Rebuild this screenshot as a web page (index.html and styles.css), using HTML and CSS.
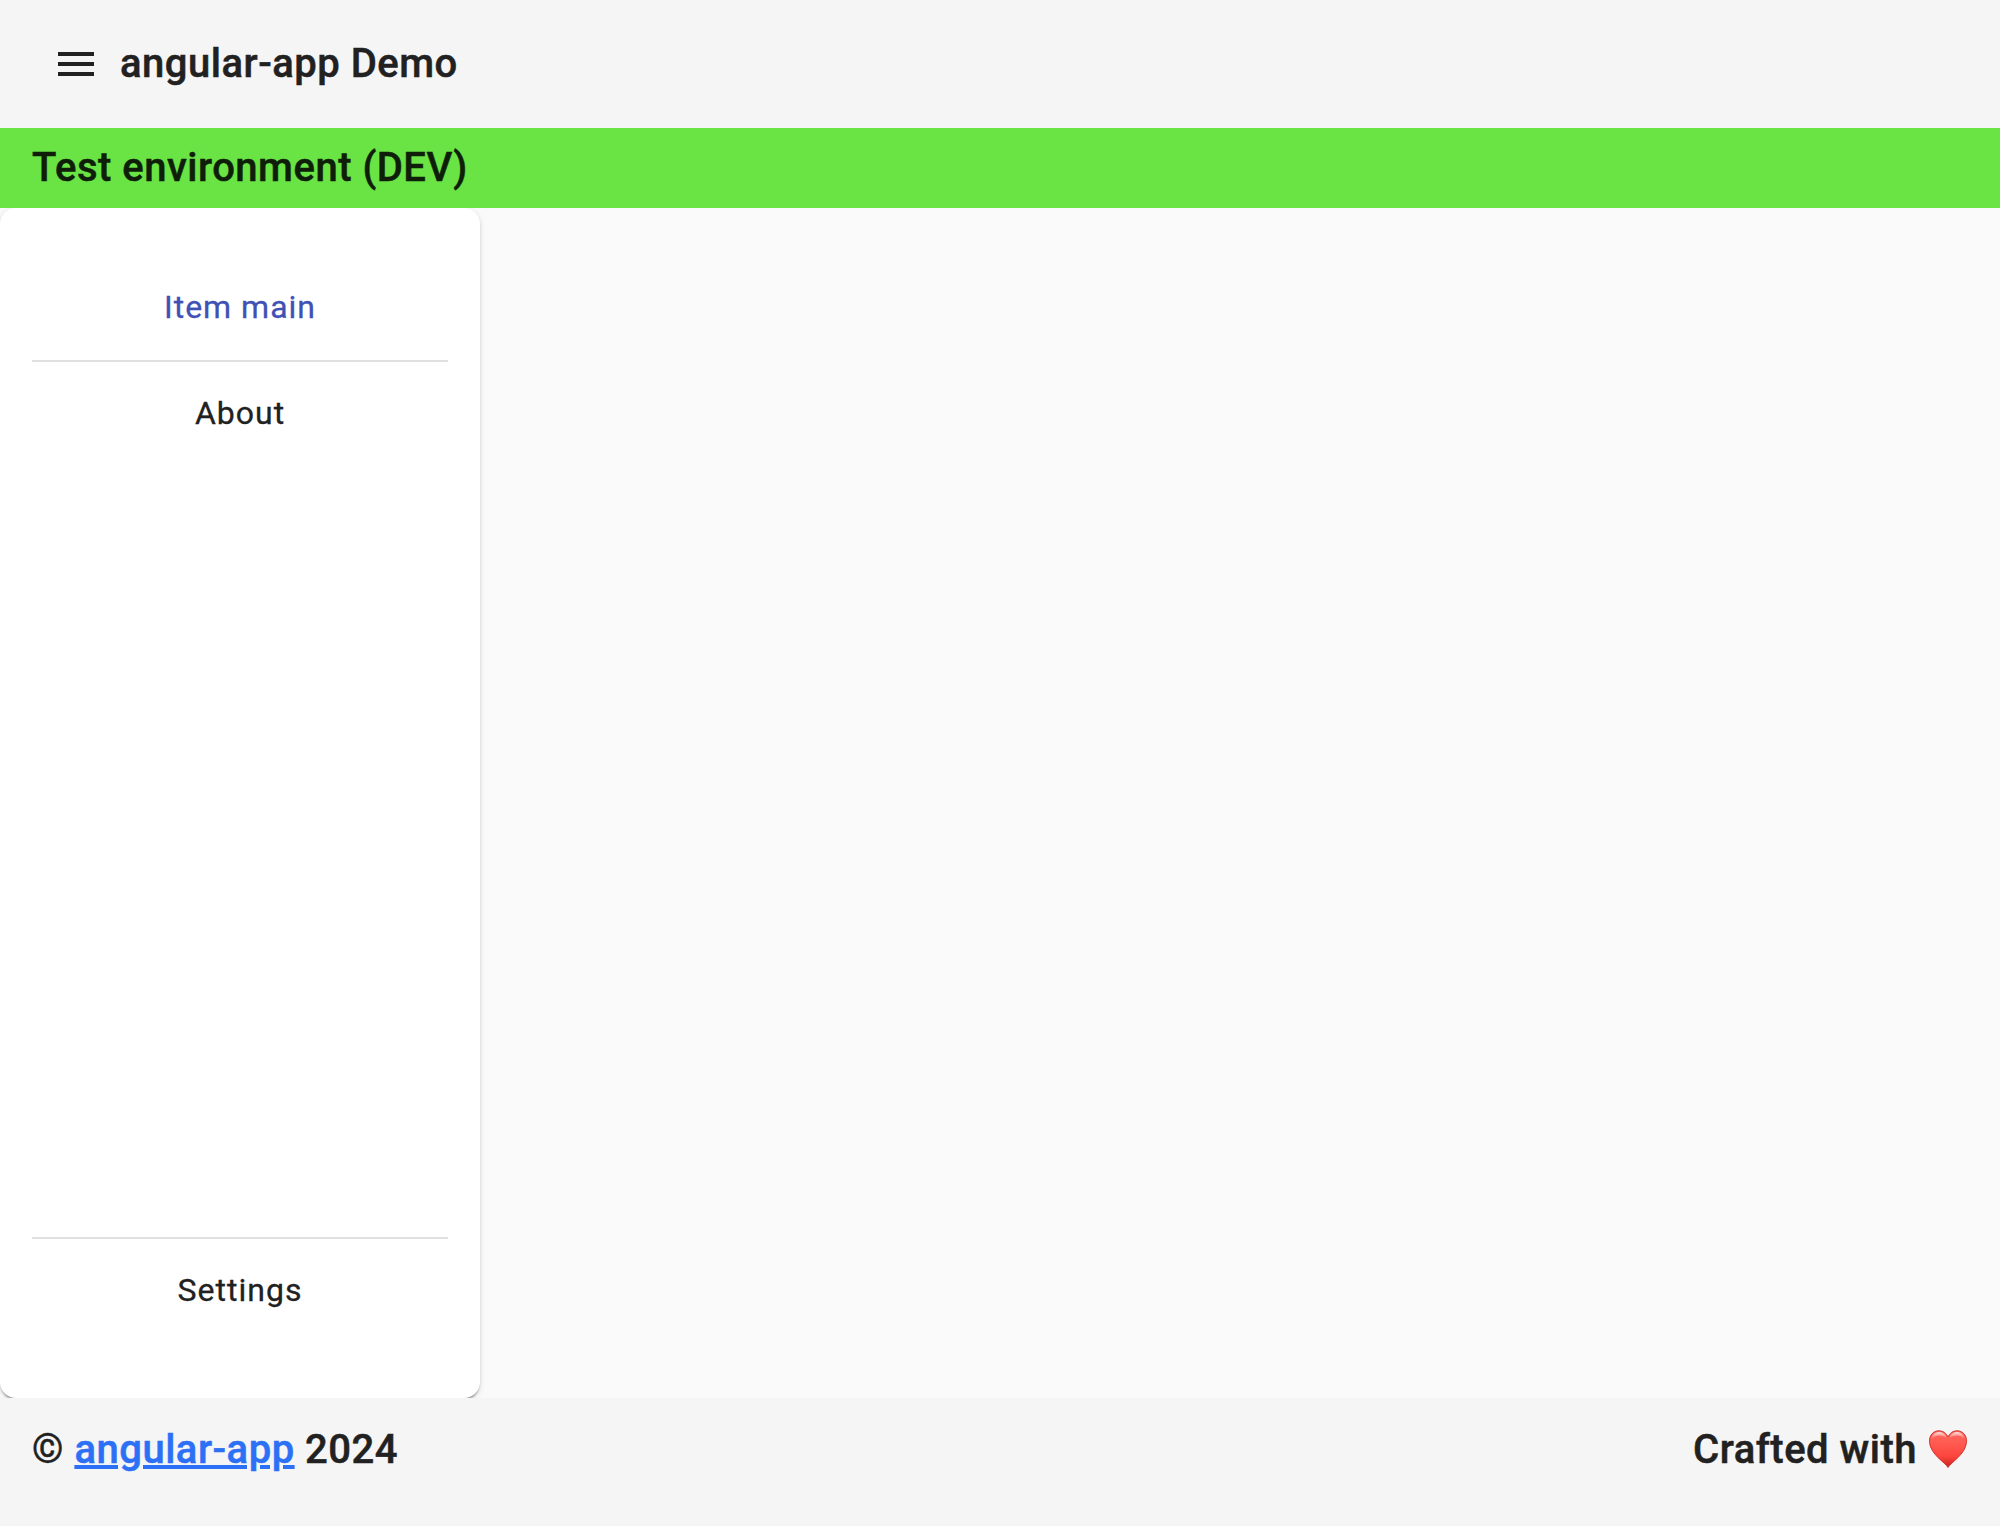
FILE: index.html
```html
<!DOCTYPE html>
<html lang="en">
<head>
  <meta charset="utf-8">
  <title>angular-app Demo</title>
  <link rel="stylesheet" href="styles.css">
</head>
<body>
  <div class="app">
    <header class="header">
      <svg class="menu-icon" viewBox="0 0 24 24" aria-label="Menu"><path d="M3 18h18v-2H3v2zm0-5h18v-2H3v2zm0-7v2h18V6H3z" fill="currentColor"/></svg>
      <h1 class="title">angular-app Demo</h1>
    </header>
    <div class="banner">Test environment (DEV)</div>
    <main class="main">
      <nav class="sidenav">
        <a class="item item-active">Item main</a>
        <a class="item item-divided">About</a>
        <div class="spacer"></div>
        <a class="item item-divided">Settings</a>
      </nav>
    </main>
    <footer class="footer">
      <span class="copyright">© <a class="link" href="#">angular-app</a> 2024</span>
      <span class="crafted">Crafted with
        <svg class="heart" viewBox="0 0 38 38" aria-label="love">
          <defs>
            <linearGradient id="body" x1="0" y1="0" x2="0" y2="1">
              <stop offset="0" stop-color="#ff6a60"/>
              <stop offset=".35" stop-color="#ff5a50"/>
              <stop offset=".7" stop-color="#fb453e"/>
              <stop offset="1" stop-color="#c91f20"/>
            </linearGradient>
            <linearGradient id="gloss" x1="0" y1="0" x2="0" y2="1">
              <stop offset="0" stop-color="#fff" stop-opacity=".75"/>
              <stop offset="1" stop-color="#fff" stop-opacity="0"/>
            </linearGradient>
          </defs>
          <path d="M19 37.500C16.500 32.500 1 24.500 .5 11.500C.3 4.800 4.800 .8 9.800 .8C14.300 .8 17.500 3.600 19 7C20.500 3.600 23.700 .8 28.200 .8C33.200 .8 37.700 4.800 37.500 11.500C37 24.500 21.500 32.500 19 37.500Z" fill="url(#body)" stroke="#d4302d" stroke-width="1"/>
          <path d="M2.500 9C3.500 4 6.500 2 10 2C14 2 16.500 4.500 17.600 8C13 4.500 6.500 4.500 2.500 9ZM35.500 9C34.500 4 31.500 2 28 2C24 2 21.500 4.500 20.400 8C25 4.500 31.500 4.500 35.500 9Z" fill="url(#gloss)"/>
        </svg>
      </span>
    </footer>
  </div>
</body>
</html>
```
FILE: styles.css
```css
* {
  box-sizing: border-box;
}

body {
  margin: 0;
  font-family: Roboto, "Liberation Sans", sans-serif;
  color: #212121;
  background: #fafafa;
}

.app {
  height: 1526px;
  display: flex;
  flex-direction: column;
  font-size: 40px;
  font-weight: 500;
  line-height: 64px;
  letter-spacing: 0.5px;
  -webkit-text-stroke: 0.5px currentColor;
}

.header {
  flex: 0 0 128px;
  display: flex;
  align-items: center;
  gap: 20px;
  padding: 0 32px 0 52px;
  background: #f5f5f5;
}

.menu-icon {
  width: 48px;
  height: 48px;
}

.title {
  margin: 0;
  font: inherit;
}

.banner {
  flex: 0 0 80px;
  padding: 8px 32px;
  background: #69e444;
  color: #0e1e09;
}

.main {
  flex: 1;
  display: flex;
  overflow: hidden;
}

.sidenav {
  width: 480px;
  display: flex;
  flex-direction: column;
  padding: 48px 32px 55px;
  border-radius: 16px;
  background: #fff;
  box-shadow: 0 4px 2px -2px rgba(0, 0, 0, 0.2), 0 2px 2px rgba(0, 0, 0, 0.14), 0 2px 6px rgba(0, 0, 0, 0.12);
}

.item {
  padding: 27px 0 29px;
  text-align: center;
  font-size: 32px;
  font-weight: 400;
  line-height: 48px;
  letter-spacing: 1px;
  -webkit-text-stroke-width: 0.3px;
}

.item-active {
  color: #3f51b5;
}

.item-divided {
  border-top: 2px solid #e0e0e0;
}

.spacer {
  flex: 1;
}

.footer {
  flex: 0 0 128px;
  display: flex;
  justify-content: space-between;
  align-items: flex-start;
  padding: 20px 32px;
  background: #f5f5f5;
}

.link {
  color: #2c70f6;
  -webkit-text-stroke-color: #2c70f6;
}

.item-active {
  -webkit-text-stroke-color: #3f51b5;
}

.crafted {
  display: flex;
  align-items: center;
  gap: 12px;
}

.heart {
  width: 38px;
  height: 38px;
  margin-right: 1px;
  margin-bottom: 3px;
}
```
